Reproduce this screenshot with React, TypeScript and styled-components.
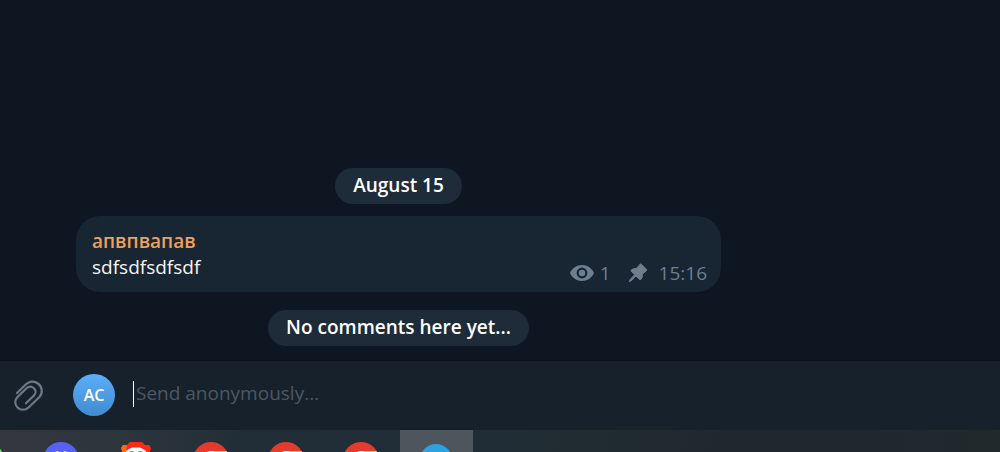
import React from "react";
import styled, { createGlobalStyle } from "styled-components";

const GlobalStyle = createGlobalStyle`
  *, *::before, *::after { box-sizing: border-box; }
  body {
    margin: 0;
    background: #0e1621;
    font-family: "Open Sans", "Noto Sans", sans-serif;
    font-size: 19px;
    line-height: 26px;
    color: #f5f5f5;
  }
  button, input { font: inherit; }
`;

const Screen = styled.div`
  display: flex;
  flex-direction: column;
  height: 100vh;
  overflow: hidden;
`;

const History = styled.main`
  flex: 1;
  display: flex;
  flex-direction: column;
  justify-content: flex-end;
  padding: 0 76px 14px;
`;

const Thread = styled.div`
  display: flex;
  flex-direction: column;
  align-items: center;
  width: 100%;
  max-width: 645px;
`;

const Pill = styled.div`
  padding: 4px 18px 6px;
  border-radius: 18px;
  background: #1e2c3a;
  color: #ffffff;
  font-weight: 600;
`;

const Bubble = styled.article`
  display: flex;
  justify-content: space-between;
  align-items: flex-end;
  width: 100%;
  margin: 12px 0 18px;
  padding: 12px 14px 12px 16px;
  border-radius: 24px;
  background: #182533;
`;

const Author = styled.div`
  color: #f0a05a;
  font-weight: 600;
`;

const Text = styled.p`
  margin: 0;
`;

const Meta = styled.div`
  display: flex;
  align-items: center;
  height: 26px;
  margin-bottom: -6px;
  color: #6d7f8f;
`;

const Views = styled.span`
  margin: 0 17px 0 6px;
`;

const Time = styled.time`
  margin-left: 11px;
`;

const Composer = styled.form`
  display: flex;
  align-items: center;
  height: 70px;
  padding: 0 12px 2px;
  border-top: 1px solid #0a121b;
  background: #17212b;
`;

const AttachButton = styled.button`
  display: flex;
  margin-right: 27px;
  padding: 2px 0 0;
  border: 0;
  background: none;
  color: #6c7883;
`;

const Avatar = styled.button`
  width: 42px;
  height: 42px;
  padding: 0;
  border: 0;
  border-radius: 50%;
  background: linear-gradient(#5caffa, #408acf);
  color: #ffffff;
  font-size: 16px;
  font-weight: 600;
`;

const MessageInput = styled.input`
  flex: 1;
  min-width: 0;
  height: 26px;
  margin: 0 0 2px 18px;
  padding: 0 0 2px 2px;
  border: 0;
  border-left: 1px solid #ffffff;
  outline: 0;
  background: none;
  color: #f5f5f5;

  &::placeholder {
    color: #4b5763;
    opacity: 1;
  }
`;

const Taskbar = styled.nav`
  display: flex;
  gap: 2px;
  height: 22px;
  overflow: hidden;
  background: linear-gradient(
    90deg,
    #35373e 0%,
    #2d353d 12%,
    #222e37 24%,
    #212d36 50%,
    #202c2f 60%,
    #20282f 72%,
    #20272f 88%,
    #22292c 100%
  );
`;

const Task = styled.button<{ $active?: boolean; $clipped?: boolean }>`
  display: flex;
  flex: none;
  align-items: flex-start;
  justify-content: center;
  width: 73px;
  height: 60px;
  margin-left: ${(p) => (p.$clipped ? "-50px" : "0")};
  padding: 12px 2px 0 0;
  border: 0;
  background: ${(p) => (p.$active ? "#4d565d" : "transparent")};
`;

const Chrome = () => (
  <svg width="36" height="36" viewBox="0 0 36 36">
    <circle cx="18" cy="18" r="18" fill="#e33b2e" />
    <path d="M18 9H33.600A18 18 0 0 1 18 36L26 22Z" fill="#fcc934" />
    <path d="M2.400 9L10 22L18 36A18 18 0 0 1 2.400 9Z" fill="#30a34f" />
    <circle cx="18" cy="18" r="9" fill="#ffffff" />
    <circle cx="18" cy="18" r="7" fill="#4285f4" />
  </svg>
);

export default function App() {
  return (
    <Screen>
      <GlobalStyle />
      <History>
        <Thread>
          <Pill>August 15</Pill>
          <Bubble>
            <div>
              <Author>апвпвапав</Author>
              <Text>sdfsdfsdfsdf</Text>
            </div>
            <Meta>
              <svg width="24" height="18" viewBox="0 0 24 18" aria-label="Views">
                <path
                  fill="currentColor"
                  fillRule="evenodd"
                  d="M12 1C6.500 1 2 4.500 0 9C2 13.500 6.500 17 12 17S22 13.500 24 9C22 4.500 17.500 1 12 1ZM12 3.600A5.400 5.400 0 1 1 12 14.400A5.400 5.400 0 1 1 12 3.600Z"
                />
                <circle cx="12" cy="9" r="3.200" fill="currentColor" />
              </svg>
              <Views>1</Views>
              <svg width="20" height="20" viewBox="0 0 20 20" aria-label="Pinned">
                <path
                  fill="currentColor"
                  stroke="currentColor"
                  strokeWidth="1"
                  strokeLinejoin="round"
                  d="M11.800 1.400Q12.700 .5 13.600 1.400L18.300 6.100Q19.100 7 18.200 7.900L17.200 8.600L14.300 11.500Q14.800 14.300 12.900 16.400Q12.200 17.100 11.500 16.400L8 13L3.200 17.700L1.200 18.600L2.100 16.600L6.700 11.700L3.300 8.400Q2.600 7.700 3.400 6.900Q5.400 5.200 8.200 5.600L11.100 2.500Z"
                />
              </svg>
              <Time>15:16</Time>
            </Meta>
          </Bubble>
          <Pill>No comments here yet...</Pill>
        </Thread>
      </History>

      <Composer onSubmit={(e) => e.preventDefault()}>
        <AttachButton type="button" aria-label="Attach file">
          <svg width="34" height="34" viewBox="0 0 34 34" fill="none">
            <path
              d="M5 15L14 6.200C17 3.300 22 2.500 26 5.500C30.500 9 31 15 27.500 19L16.500 29.500C13.500 32.500 8.500 32.500 5.500 29.500C2.500 26.500 2.500 22 5.500 19L14.500 10.300C17 8 20 8.500 22 10.300C24 12.500 24 15.500 22 17.500L14 25.300"
              transform="translate(0 -1)"
              stroke="currentColor"
              strokeWidth="2.200"
              strokeLinecap="round"
            />
          </svg>
        </AttachButton>
        <Avatar type="button" aria-label="Send as AC">AC</Avatar>
        <MessageInput aria-label="Message" placeholder="Send anonymously..." />
      </Composer>

      <Taskbar aria-label="Taskbar">
        <Task $clipped aria-label="WhatsApp">
          <svg width="36" height="36" viewBox="0 0 36 36">
            <circle cx="18" cy="18" r="18" fill="#5fdc72" />
          </svg>
        </Task>
        <Task aria-label="Discord">
          <svg width="36" height="36" viewBox="0 0 36 36">
            <circle cx="18" cy="18" r="18" fill="#5662f6" />
            <path
              fill="#ffffff"
              d="M12 10L15 9L16 10.500H20L21 9L24 10C27 14 28 18 27.500 23L23 26L21.500 23.500H14.500L13 26L8.500 23C8 18 9 14 12 10Z"
            />
          </svg>
        </Task>
        <Task aria-label="Browser">
          <svg width="36" height="36" viewBox="0 0 36 36">
            <path
              fill="#ff2a12"
              d="M9 3L12 0H24L27 3L31 3L33 6L31 12L29 24L18 35L7 24L5 12L3 6L5 3H9Z"
            />
            <path fill="#ff6a10" d="M3 6L5 3H9L8 10H4.500Z" />
            <path
              fill="#ffffff"
              d="M8 9L11 7L14 5.500H22L25 7L28 9L27 20L18 29L9 20Z"
            />
            <path fill="#ff2a12" d="M11 9L16 9.500L15 11ZM25 9L20 9.500L21 11Z" />
          </svg>
        </Task>
        <Task aria-label="Chrome window 1"><Chrome /></Task>
        <Task aria-label="Chrome window 2"><Chrome /></Task>
        <Task aria-label="Chrome window 3"><Chrome /></Task>
        <Task $active aria-label="Telegram">
          <svg width="36" height="36" viewBox="0 0 36 36">
            <circle cx="18" cy="18" r="16" fill="#2ca3df" />
            <path fill="#ffffff" d="M8 18L27 11L24 26L18 22L15 25L14 20Z" />
          </svg>
        </Task>
      </Taskbar>
    </Screen>
  );
}
